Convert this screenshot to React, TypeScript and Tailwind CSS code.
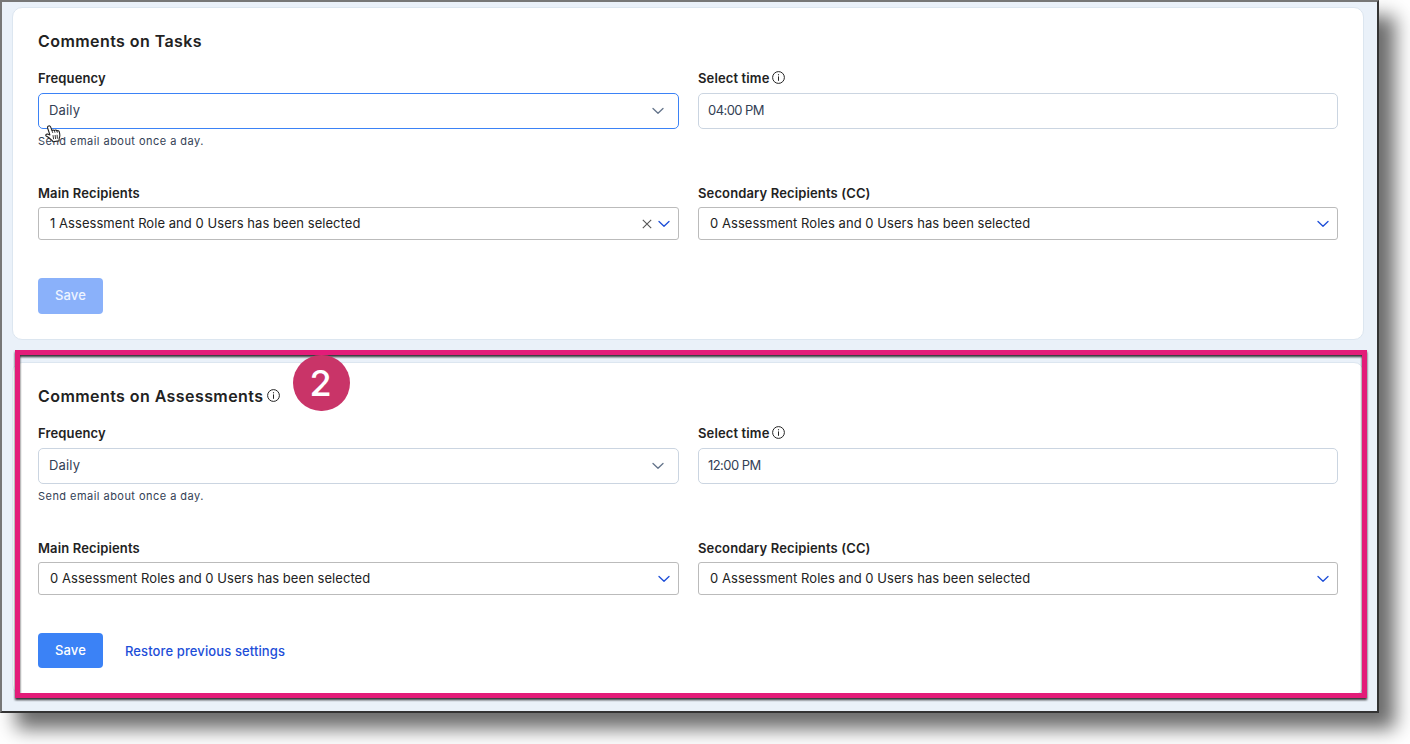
import { ReactNode } from "react";
import clsx from "clsx";

const InfoIcon = () => (
    <svg width="13" height="13" viewBox="0 0 13 13" fill="none" stroke="#222" className="-mt-px shrink-0">
        <circle cx="6.5" cy="6.5" r="5.9" strokeWidth="1" />
        <path d="M6.5 5.4V9.8" strokeWidth="1" />
        <path d="M6.5 3.2V4.3" strokeWidth="1.1" />
    </svg>
);

const Chevron = ({ className }: { className?: string }) => (
    <svg width="12" height="8" viewBox="0 0 12 8" fill="none" stroke="currentColor" strokeWidth="1.3" strokeLinecap="round" strokeLinejoin="round" className={className}>
        <path d="M1 1.5L6 6.3L11 1.5" />
    </svg>
);

const ClearIcon = () => (
    <svg width="10" height="10" viewBox="0 0 10 10" fill="none" stroke="#555" strokeWidth="1.1">
        <path d="M0.8 0.8L9.2 9.2M9.2 0.8L0.8 9.2" />
    </svg>
);

const HandCursor = () => (
    <svg width="16" height="18" viewBox="0 0 16 18" className="absolute left-[45px] top-[125px]">
        <path
            d="M3.4 1.1C4.3 0.5 5.2 0.9 5.6 1.9L7 5.6C7.6 4.8 8.9 4.8 9.4 5.6C10.2 4.7 11.4 5 11.9 5.9C12.9 5.2 14 5.8 14.3 6.9C15 9.4 15.2 11.3 14.2 13.2L14 15.9L8 16.7C6.7 14.5 4 12.7 1.2 11C0.2 10 1.2 8.8 2.6 9.1L4.9 9.9L2.6 3C2.4 2.2 2.7 1.5 3.4 1.1Z"
            fill="#fff" stroke="#222" strokeWidth="1.1" strokeLinejoin="round"
        />
        <path d="M7 5.6L7.8 8M9.4 5.6L10 7.8M11.9 5.9L12.4 7.8" stroke="#222" strokeWidth="0.8" />
        <path d="M8 10.2L8.6 14.2M10.1 10L10.6 14M12.1 9.8L12.4 13.7" stroke="#222" strokeWidth="0.9" />
    </svg>
);

const Label = ({ children, info }: { children: ReactNode, info?: boolean }) => (
    <div className="flex h-5 items-center gap-[3px] text-[13px] font-semibold leading-5 tracking-[0.13px] text-[#222]">
        <span>{children}</span>
        {info && <InfoIcon />}
    </div>
);

const Recipients = ({ label, text, clearable }: { label: string, text: string, clearable?: boolean }) => (
    <div>
        <Label>{label}</Label>
        <div className="mt-1 flex h-[33px] items-center rounded-[3px] border border-[#bbb] pl-[11px] pr-2">
            <span className="flex-1 text-[13px] tracking-[0.05px] text-[#222]">{text}</span>
            {clearable && <span className="mr-1.5"><ClearIcon /></span>}
            <Chevron className="text-[#1d4ed8]" />
        </div>
    </div>
);

interface CardProps {
    title: string;
    info?: boolean;
    focused?: boolean;
    time: string;
    recipients: string;
    clearable?: boolean;
    children: ReactNode;
}

const SettingsCard = ({ title, info, focused, time, recipients, clearable, children }: CardProps) => (
    <section className="h-[333px] rounded-[10px] border border-[#dce6f0] bg-white pl-[25px] pr-[25px] pt-[21px]">
        <h2 className="flex h-6 items-center gap-1 text-[16px] font-semibold leading-6 tracking-[0.43px] text-[#222]">
            <span>{title}</span>
            {info && <InfoIcon />}
        </h2>
        <div className="mt-[15px] grid grid-cols-[641px_640px] gap-x-[19px]">
            <div className="h-[115px]">
                <Label>Frequency</Label>
                <div className={clsx("mt-[5px] flex h-9 items-center justify-between rounded-[5px] border pl-2.5 pr-3.5", focused ? "border-[#3b82f6]" : "border-[#cbd5e1]")}>
                    <span className="text-[13px] tracking-[0.15px] text-[#334155]">Daily</span>
                    <Chevron className="text-[#64748b]" />
                </div>
                <p className="mt-1 text-[11px] leading-4 tracking-[0.46px] text-[#334155]">Send email about once a day.</p>
            </div>
            <div>
                <Label info>Select time</Label>
                <div className="mt-[5px] flex h-9 items-center rounded-[5px] border border-[#cbd5e1] pl-[9px] text-[13px] tracking-[-0.55px] text-[#334155]">
                    <span>{time}</span>
                </div>
            </div>
            <Recipients label="Main Recipients" text={recipients} clearable={clearable} />
            <Recipients label="Secondary Recipients (CC)" text="0 Assessment Roles and 0 Users has been selected" />
        </div>
        <div className="mt-[38px] flex items-center">{children}</div>
    </section>
);

const App = () => {
    return (
        <div className="relative h-[744px] w-[1410px] overflow-hidden bg-white font-['Inter',sans-serif]">
            <main className="flex h-[713px] w-[1379px] flex-col gap-[22px] border-2 border-b-[#333] border-l-[#777] border-r-[#333] border-t-[#777] bg-[#eaf1f9] pl-[10px] pr-[13px] pt-[5px] shadow-[16px_16px_18px_rgba(0,0,0,0.58)]">
                <SettingsCard title="Comments on Tasks" focused time="04:00 PM" recipients="1 Assessment Role and 0 Users has been selected" clearable>
                    <button className="h-9 w-[65px] rounded-[4px] bg-[#8ab1fa] text-[13px] font-medium tracking-[0.2px] text-[#eef4ff]">Save</button>
                </SettingsCard>
                <SettingsCard title="Comments on Assessments" info time="12:00 PM" recipients="0 Assessment Roles and 0 Users has been selected">
                    <button className="h-[35px] w-[65px] rounded-[4px] bg-[#3b82f6] text-[13px] font-medium tracking-[0.2px] text-white">Save</button>
                    <a className="ml-[22px] mt-0.5 text-[13px] font-medium tracking-[0.11px] text-[#1d4ed8]">Restore previous settings</a>
                </SettingsCard>
            </main>

            {/* callout around the second card */}
            <div className="absolute left-[15px] top-[350px] h-[348px] w-[1352px] border-[5px] border-[#e31c79] drop-shadow-[0_2px_1px_rgba(0,0,0,0.8)]" />
            <div className="absolute left-[293px] top-[355px] flex h-14 w-[57px] items-center justify-center rounded-full bg-[#c93468] pr-0.5 text-[36px] font-medium text-white">2</div>
            <HandCursor />
        </div>
    );
};

export default App;
